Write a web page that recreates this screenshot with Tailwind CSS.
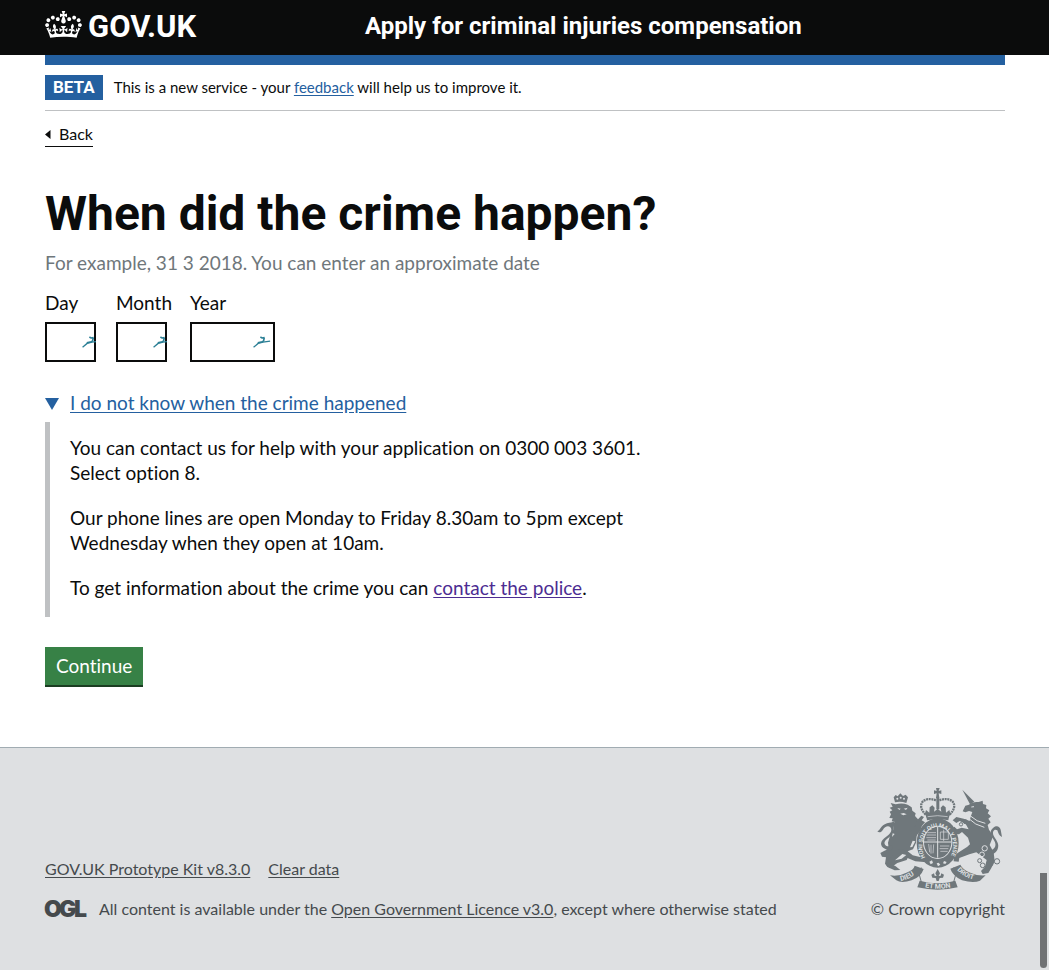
<!DOCTYPE html>
<html lang="en">
<head>
<meta charset="utf-8">
<meta name="viewport" content="width=device-width, initial-scale=1">
<title>When did the crime happen?</title>
<script src="https://cdn.jsdelivr.net/npm/@tailwindcss/browser@4"></script>
</head>
<body class="min-h-screen bg-white font-['Lato',sans-serif] text-[19px] leading-[25px] text-[#0b0c0c] [font-variant-ligatures:none]">

<svg class="hidden" aria-hidden="true">
  <symbol id="bird" viewBox="0 0 54 37">
    <g fill="none" stroke="#2b7f95" stroke-width="4"><path d="M1 35 15 23 30 19 52 16"/><path stroke-width="5" d="M14 21 28 18M22 3l5 3 8-1M34 5l-2 10-6 4"/></g>
  </symbol>
</svg>

<header class="bg-[#0b0c0c] text-white">
  <div class="mx-auto flex h-[55px] max-w-[1050px] pr-[44px] pl-[45px]">
    <div class="w-1/3 pt-[11px]">
      <a href="#" class="inline-flex items-start gap-[6px]">
        <svg class="h-[27px] w-[37px]" viewBox="0 0 132 97" aria-hidden="true"><path fill="currentColor" fill-rule="evenodd" d="M25 30.2c3.5 1.5 7.7-.2 9.1-3.7 1.5-3.6-.2-7.8-3.9-9.2-3.6-1.4-7.6.3-9.1 3.9-1.4 3.5.3 7.5 3.9 9zM9 39.5c3.6 1.5 7.8-.2 9.2-3.7 1.5-3.6-.2-7.8-3.9-9.1-3.6-1.5-7.6.2-9.1 3.8-1.4 3.5.3 7.5 3.8 9zM4.4 57.2c3.5 1.5 7.7-.2 9.1-3.8 1.5-3.6-.2-7.7-3.9-9.1-3.5-1.5-7.6.3-9.1 3.8-1.4 3.5.3 7.6 3.9 9.1zm38.3-21.4c3.5 1.5 7.7-.2 9.1-3.8 1.5-3.6-.2-7.7-3.9-9.1-3.6-1.5-7.6.3-9.1 3.8-1.3 3.6.4 7.7 3.9 9.1zm64.4-5.6c-3.6 1.5-7.8-.2-9.1-3.7-1.5-3.6.2-7.8 3.8-9.2 3.6-1.4 7.7.3 9.2 3.9 1.3 3.5-.4 7.5-3.9 9zm15.9 9.3c-3.6 1.5-7.7-.2-9.1-3.7-1.5-3.6.2-7.8 3.7-9.1 3.6-1.5 7.7.2 9.2 3.8 1.5 3.5-.3 7.5-3.8 9zm4.7 17.7c-3.6 1.5-7.8-.2-9.2-3.8-1.5-3.6.2-7.7 3.9-9.1 3.6-1.5 7.7.3 9.2 3.8 1.3 3.5-.4 7.6-3.9 9.1zM89.3 35.8c-3.6 1.5-7.8-.2-9.2-3.8-1.4-3.6.2-7.7 3.9-9.1 3.6-1.5 7.7.3 9.2 3.8 1.4 3.6-.3 7.7-3.9 9.1zM69.7 17.7l8.9 4.7V9.3l-8.9 2.8c-.2-.3-.5-.6-.9-.9L72.4 0H59.6l3.5 11.2c-.3.3-.6.5-.9.9l-8.8-2.8v13.1l8.8-4.7c.3.3.6.7.9.9l-5 15.4v.1c-.2.8-.4 1.6-.4 2.4 0 4.1 3.1 7.5 7 8.1h.2c.3 0 .7.1 1 .1.4 0 .7 0 1-.1h.2c4-.6 7.1-4.1 7.1-8.1 0-.8-.1-1.7-.4-2.4V34l-5.1-15.4c.4-.2.7-.6 1-.9zM66 92.8c16.9 0 32.8 1.1 47.1 3.2 4-16.9 8.9-26.7 14-33.5l-9.6-3.4c1 4.9 1.1 7.2 0 10.2-1.5-1.4-3-4.3-4.2-8.7L108.6 76c2.8-2 5-3.2 7.5-3.3-4.4 9.4-10 11.9-13.6 11.2-4.3-.8-6.3-4.6-5.6-7.9 1-4.7 5.7-5.9 8-.5 4.3-8.7-3-11.4-7.6-8.8 7.1-7.2 7.9-13.5 2.1-21.1-8 6.1-8.1 12.3-4.5 20.8-4.7-5.4-12.1-2.5-9.5 6.2 3.4-5.2 7.9-2 7.2 3.1-.6 4.3-6.4 7.8-13.5 7.2-10.3-.9-10.9-8-11.2-13.8 2.5-.5 7.1 1.8 11 7.3L80.2 60c-4.1 4.4-8 5.3-12.3 5.4 1.4-4.4 8-11.6 8-11.6H55.5s6.4 7.2 7.9 11.6c-4.2-.1-8-1-12.3-5.4l1.4 16.4c3.9-5.5 8.5-7.7 10.9-7.3-.3 5.8-.9 12.8-11.1 13.8-7.2.6-12.9-2.9-13.5-7.2-.7-5 3.8-8.3 7.1-3.1 2.7-8.7-4.6-11.6-9.4-6.2 3.7-8.5 3.6-14.7-4.6-20.8-5.8 7.6-5 13.9 2.2 21.1-4.7-2.6-11.9.1-7.7 8.8 2.3-5.5 7.1-4.2 8.1.5.7 3.3-1.3 7.1-5.7 7.9-3.5.7-9-1.8-13.5-11.2 2.5.1 4.7 1.3 7.5 3.3l-4.7-15.4c-1.2 4.4-2.7 7.2-4.3 8.7-1.1-3-.9-5.3 0-10.2l-9.5 3.4c5 6.9 9.9 16.7 14 33.5 14.8-2.1 30.8-3.2 47.7-3.2z"/></svg>
        <span class="font-['Roboto',sans-serif] text-[31px] leading-[32px] font-bold">GOV.UK</span>
      </a>
    </div>
    <div class="w-2/3 pt-[11px]">
      <a href="#" class="whitespace-nowrap font-['Roboto',sans-serif] text-[24px] leading-[30px] font-bold">Apply for criminal injuries compensation</a>
    </div>
  </div>
</header>

<div class="mx-auto max-w-[1050px] pr-[44px] pl-[45px]">
  <div class="h-[10px] bg-[#2460a0]"></div>
  <div class="flex items-center gap-[11px] border-b border-[#bfc1c3] py-[10px] text-[15px]">
    <strong class="bg-[#2460a0] px-2 font-['Roboto',sans-serif] text-[17px] font-bold text-white">BETA</strong>
    <span>This is a new service - your <a href="#" class="text-[#2460a0] underline underline-offset-2">feedback</a> will help us to improve it.</span>
  </div>
  <a href="#" class="mt-[12px] inline-flex items-center gap-2 border-b border-[#0b0c0c] pb-px text-[16px] leading-[22px]">
    <svg class="h-[9px] w-[6px]" viewBox="0 0 6 9" aria-hidden="true"><path fill="currentColor" d="M0 4.500 5.500 0v9z"/></svg>Back</a>

  <main class="pt-[42px] pb-[60px]">
    <form class="max-w-[640px]" onsubmit="return false">
      <fieldset>
        <legend class="font-['Roboto',sans-serif] text-[48px] leading-[50px] font-bold whitespace-nowrap"><h1>When did the crime happen?</h1></legend>
        <p class="mt-[11px] text-[#6f777b]">For example, 31 3 2018. You can enter an approximate date</p>
        <div class="mt-[15px] flex gap-[20px]">
          <div>
            <label for="day" class="mb-[7px] block w-[51px]">Day</label>
            <div class="relative w-[51px] overflow-hidden">
              <input id="day" name="day" type="text" inputmode="numeric" class="block h-[40px] w-full border-2 border-[#0b0c0c] px-1 outline-none">
              <svg class="absolute top-[14px] left-[37px] h-[12px] w-[18px]" aria-hidden="true"><use href="#bird"/></svg>
            </div>
          </div>
          <div class="w-[54px]">
            <label for="month" class="mb-[7px] block">Month</label>
            <div class="relative w-[51px] overflow-hidden">
              <input id="month" name="month" type="text" inputmode="numeric" class="block h-[40px] w-full border-2 border-[#0b0c0c] px-1 outline-none">
              <svg class="absolute top-[14px] left-[37px] h-[12px] w-[18px]" aria-hidden="true"><use href="#bird"/></svg>
            </div>
          </div>
          <div>
            <label for="year" class="mb-[7px] block">Year</label>
            <div class="relative w-[85px] overflow-hidden">
              <input id="year" name="year" type="text" inputmode="numeric" class="block h-[40px] w-full border-2 border-[#0b0c0c] px-1 outline-none">
              <svg class="absolute top-[14px] left-[63px] h-[12px] w-[18px]" aria-hidden="true"><use href="#bird"/></svg>
            </div>
          </div>
        </div>
      </fieldset>

      <details open class="mt-[28px]">
        <summary class="flex cursor-pointer list-none items-center gap-[11px] text-[#2460a0]">
          <svg class="mt-[3px] h-[12px] w-[14px]" viewBox="0 0 14 12" aria-hidden="true"><path fill="currentColor" d="M0 0h14L7 12z"/></svg>
          <span class="underline underline-offset-2">I do not know when the crime happened</span>
        </summary>
        <div class="mt-[7px] space-y-[20px] border-l-[5px] border-[#bfc1c3] px-[20px] pt-[13px] pb-[17px]">
          <p>You can contact us for help with your application on 0300 003 3601. Select option 8.</p>
          <p>Our phone lines are open Monday to Friday 8.30am to 5pm except Wednesday when they open at 10am.</p>
          <p>To get information about the crime you can <a href="#" class="text-[#4c2c92] underline underline-offset-2">contact the police</a>.</p>
        </div>
      </details>

      <button type="submit" class="mt-[30px] block border-b-2 border-[#1b3d22] bg-[#378146] px-[11px] pt-[6px] pb-[7px] text-white">Continue</button>
    </form>
  </main>
</div>

<footer class="border-t border-[#a1acb2] bg-[#dee0e2] text-[16px] text-[#454a4d]">
  <div class="mx-auto flex max-w-[1050px] items-end justify-between pt-[40px] pr-[44px] pb-[49px] pl-[45px]">
    <div>
      <ul class="flex gap-[18px]">
        <li><a href="#" class="underline underline-offset-2">GOV.UK Prototype Kit v8.3.0</a></li>
        <li><a href="#" class="underline underline-offset-2">Clear data</a></li>
      </ul>
      <div class="mt-[15px] flex items-center gap-[12px]">
        <svg class="h-[17px] w-[42px] overflow-visible" viewBox="0 0 42 17" role="img" aria-label="OGL" fill="currentColor" font-family="Inter, sans-serif" font-weight="900" font-size="23"><text x="-1" y="17">O</text><text x="14" y="17">G</text><text x="29" y="17">L</text></svg>
        <span>All content is available under the <a href="#" class="underline underline-offset-2">Open Government Licence v3.0</a>, except where otherwise stated</span>
      </div>
    </div>
    <a href="#" class="flex flex-col items-end gap-[6px] whitespace-nowrap">
      <svg class="h-[102px] w-[130px]" viewBox="30 24 390 306" aria-hidden="true" fill="#6f777b" font-family="Roboto, sans-serif" font-weight="700">
        <defs>
          <path id="garter" d="M181 232A46 57 0 1 1 256 231"/>
          <path id="dieu" d="M107 303Q139 297 163 272"/>
          <path id="mon" d="M180 322Q218 330 260 322"/>
          <path id="droit" d="M276 270Q300 297 341 301"/>
        </defs>
        <!-- lion -->
        <path d="M90 67 86 52l6-7 6 4 8-9 8 8 8-4 7 8-5 17q-17-6-34-2z"/>
        <g fill="#dee0e2"><circle cx="97" cy="56" r="3"/><circle cx="107" cy="53" r="3"/><circle cx="117" cy="56" r="3"/></g>
        <path d="M92 73q18-6 36 1l12 8 2 10 10 8-2 8 9 10-1 8 7 8-4 9 6 7q-10 6-12 18l-2 20-9 20-16 6 15 12 22 5 20 4v12l-34-3-29-12-6-14-14-2-16 12-7 10 1 15 12 6 14 11-17 1-22-10-7-10 3-19-12-2-5-11 11-6 14-7-2-18 8-28 10-12-3-13 5-10-9-1 3-9-10-1 5-11-4-8 8-4-8-8 9-3-6-11z"/>
        <path d="m135 153 16-14 4-17 14-15 8 4-7 10 10 6-9 10-6 17-16 20zM100 208l17 2 15 16-7 14-28 9-22 16-12-11 10-18z"/>
        <path d="M80 213c-20-3-38-13-30-29 8-15 29-19 29-35 0-14-19-14-25 0-5 8-12 10-17 5 9-2 9-18 29-24 10-3 15-2 23-7-2 8-2 12-3 19 5 30-31 33-27 50 3 9 14 8 25 4z"/>
        <g fill="#dee0e2"><path d="m97 84 10 2-4 4zM116 86l12-3-5 7zM106 101l10-2 9 4-10 3zM83 160l6 2-8 9zM151 184l-9 17-7 1 8-20zM112 222l12 3-14 11-20 5z"/></g>
        <!-- unicorn -->
        <path d="m292 29 36 36-13 8z"/>
        <path d="M312 74q10-10 29-8l12-4 1 10 10 3-1 10 10 6-5 9 10 9-8 7 7 11-9 8 4 14q10 12 9 28l-7 18 12 22 3 27-10 20-9 15-17 3-5-9 12-13 5-20-17-13-14-10-21 6-30 11-2 11-15-1 1-16 12-10 27-17 9-8-6-20-18-17-9 7-14-2-9-11 9-10 8 8 14-5 21 5-9-16-18-9-10 6-11-8 11-10 22 5 18 7 3-13 5-14-10-3-11 4-8-3 8-17z"/>
        <path d="M369 214c27-5 26-23 16-36-10-14-12-25 0-35 9-8 19-5 22 6l4 22c-9-4-11-11-14-20-8-6-17 2-11 16 9 16 18 24 12 40-4 12-16 18-28 16z"/>
        <g fill="none" stroke="#dee0e2" stroke-width="3"><path d="M309 114q22 22 49 28M315 107q20 19 46 23M319 81l8-1"/></g>
        <g fill="none" stroke="#6f777b" stroke-width="3"><circle cx="301" cy="125" r="6"/><circle cx="288" cy="133" r="5"/><circle cx="359" cy="205" r="8" stroke="#dee0e2"/><circle cx="351" cy="223" r="7" stroke="#dee0e2"/><circle cx="344" cy="242" r="6"/><circle cx="353" cy="256" r="7"/><circle cx="377" cy="251" r="7"/><circle cx="396" cy="244" r="8"/></g>
        <!-- royal crown -->
        <path d="m213 24 11 0-3 9 8-2v11l-8-2 2 14h-10l2-14-8 2V31l8 2z"/>
        <g fill="none" stroke="#6f777b" stroke-width="7" stroke-dasharray="6 2"><path d="M182 104C150 72 180 46 214 62M254 104C286 72 256 46 222 62"/></g>
        <path d="M214 53h9v35h-9zM180 101l3-11 10 8 1-16 8-6 7 7-2 12 11-8 11 8-2-12 7-7 8 6 1 16 10-8 3 11-5 12q-33-7-66 0z"/>
        <path d="M183 104q35-8 70 0l-3 17q-32-6-64 0z"/>
        <path fill="none" stroke="#dee0e2" stroke-width="2" d="M188 110q30-6 60 0"/>
        <!-- garter and shield -->
        <ellipse cx="218" cy="189" rx="63" ry="74"/>
        <ellipse cx="218" cy="187" rx="44" ry="50" fill="#dee0e2"/><ellipse cx="218" cy="187" rx="41" ry="47"/>
        <g fill="none" stroke="#dee0e2" stroke-width="3"><path d="M176 186h84M218 141v92"/><path stroke-width="2" d="M187 158h26M185 165h28M184 173h29M187 180h25M225 198h28M224 206h26M226 214h22M236 149v34M226 156h24v22h-24zM198 194v27M191 192l3 25M206 193l-2 27"/></g>
        <text font-size="17" fill="#dee0e2"><textPath href="#garter">HONI SOIT QUI MAL Y PENSE</textPath></text>
        <path fill="#dee0e2" d="m193 245 8-4 3 8-7 4zM215 250l6-2 5 6-7 5zM237 243l8 3-4 6-7-2z"/>
        <!-- motto ribbon -->
        <path d="M75 286q27 4 49-8 22-8 25-21l27 10q-8 24-36 34-31 10-46 0zM362 286q-26 2-46-8-22-8-30-24l-30 12q6 20 35 35 35 10 54 1z"/>
        <path fill="none" stroke="#6f777b" stroke-width="3" d="M171 264q-19 2-9 17l7 25M264 264q19 2 9 17l-7 25"/>
        <path d="M164 302q54 15 107 0l7 20q-59 14-121 0z"/>
        <g fill="#dee0e2" font-size="21"><text><textPath href="#dieu">DIEU</textPath></text><text><textPath href="#mon">ET MON</textPath></text><text font-size="20"><textPath href="#droit">DROIT</textPath></text></g>
        <path d="m218 267 7 13-4 8 6-1 2-7 8 4-3 9-10 1-3 9h-6l-3-9-10-1-3-9 8-4 2 7 6 1-4-8z"/>
      </svg>
      <span>© Crown copyright</span>
    </a>
  </div>
</footer>

<!-- overlay scroll thumb -->
<div class="fixed right-[2px] bottom-[2px] h-[95px] w-[7px] rounded-b-full bg-[#707274]" aria-hidden="true"></div>
</body>
</html>
